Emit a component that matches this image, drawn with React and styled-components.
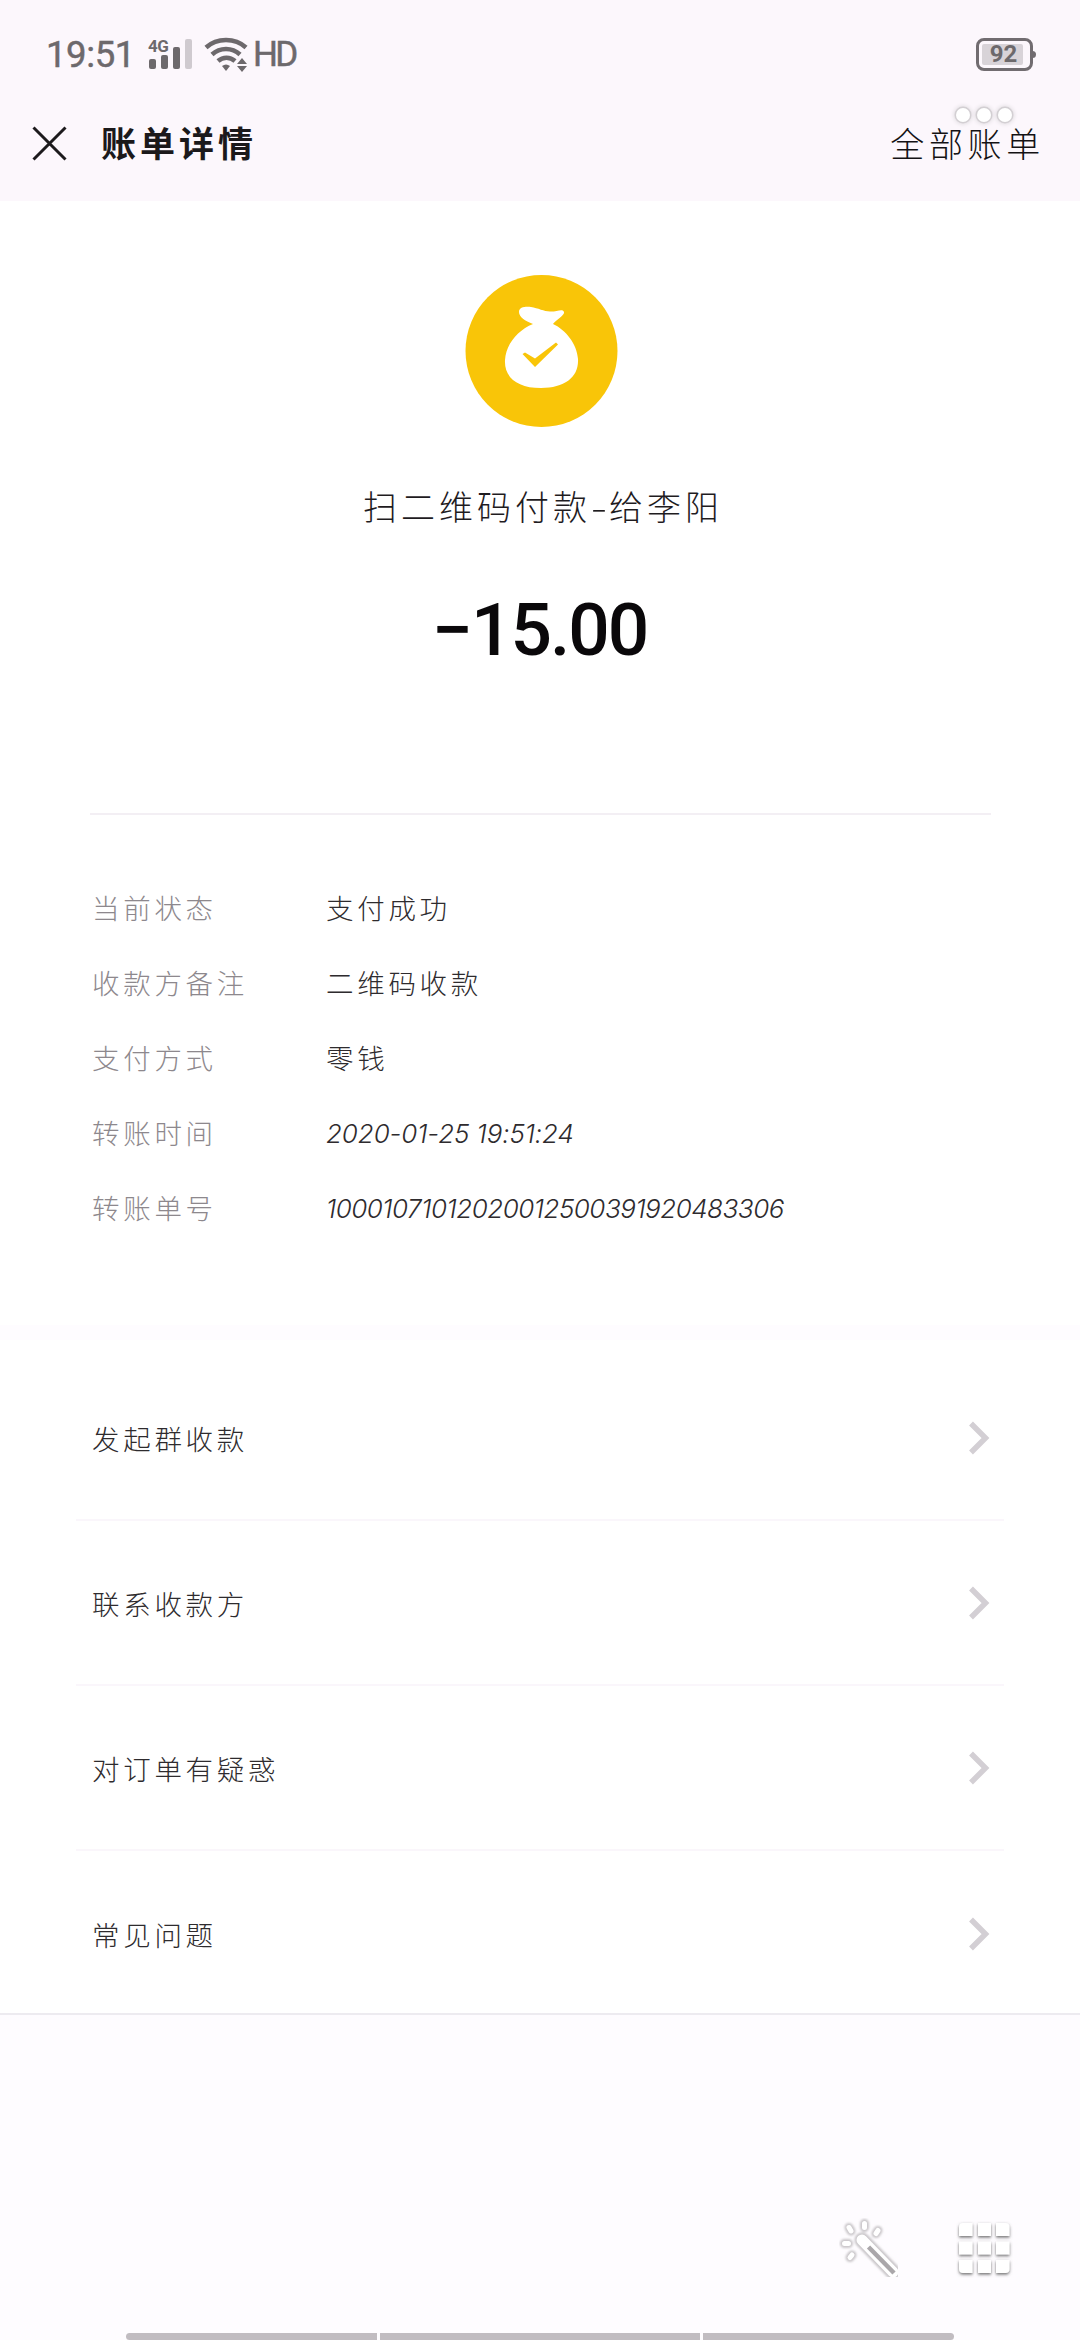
import React from "react";
import styled, { createGlobalStyle } from "styled-components";

const Global = createGlobalStyle`
  * { box-sizing: border-box; }
  body { margin: 0; background: #fefcff; }
`;

const hand = `"Noto Sans CJK SC", sans-serif`;

const Screen = styled.div`
  width: 1080px;
  height: 2340px;
  display: flex;
  flex-direction: column;
  overflow: hidden;
  background: #fefcff;
  font-family: ${hand};
  font-weight: 300;
  color: #2e2b2e;
`;

const Header = styled.header`
  height: 201px;
  flex: none;
  background: #fcf7fc;
  position: relative;
`;

const StatusBar = styled.div`
  height: 100px;
  padding: 9px 47px 0 46px;
  display: flex;
  align-items: center;
  color: #6d696c;
  font-family: Roboto, sans-serif;
  font-weight: 400;
`;

const Clock = styled.span`
  width: 102px;
  font-size: 36.5px;
  letter-spacing: -0.4px;
  -webkit-text-stroke: 0.5px #6d696c;
`;

const Hd = styled.span`
  margin-left: 5px;
  font-size: 35px;
  letter-spacing: -2.6px;
  -webkit-text-stroke: 0.5px #6d696c;
`;

const Spacer = styled.div`
  flex: 1;
`;

const Battery = styled.div`
  width: 57px;
  height: 33px;
  border: 3px solid #716c70;
  border-radius: 8px;
  padding: 3px;
  position: relative;
  &::after {
    content: "";
    position: absolute;
    left: 53px;
    top: 10px;
    width: 4px;
    height: 7px;
    border-radius: 0 4px 4px 0;
    background: #716c70;
  }
`;

const Charge = styled.div`
  width: 41px;
  height: 21px;
  border-radius: 2px;
  background: #d8d3d8;
  display: flex;
  align-items: center;
  justify-content: center;
  padding-left: 2px;
  font-size: 24px;
  font-weight: 700;
  line-height: 21px;
`;

const TitleBar = styled.div`
  height: 86px;
  padding: 0 35px 0 32px;
  display: flex;
  align-items: center;
`;

const Title = styled.h1`
  margin: -2px 0 0 34px;
  font-size: 35px;
  line-height: 50px;
  letter-spacing: 4px;
  font-weight: 700;
  color: #1b191b;
`;

const AllBills = styled.span`
  margin-top: -1px;
  font-size: 34px;
  line-height: 50px;
  letter-spacing: 4.7px;
  color: #141214;
`;

const Handle = styled.div`
  position: absolute;
  left: 956px;
  top: 108px;
  display: flex;
  gap: 7px;
`;

const Dot = styled.i`
  width: 14px;
  height: 14px;
  border-radius: 50%;
  background: #fff;
  box-shadow: 0 0 0 1.5px #d3cfd3, 0 0 4px 2px #dcd8dc;
`;

const Summary = styled.section`
  height: 612px;
  flex: none;
  background: #fff;
  display: flex;
  flex-direction: column;
  align-items: center;
  padding: 73px 0 0 2px;
`;

const Payee = styled.div`
  margin-top: 53px;
  height: 50px;
  line-height: 50px;
  font-size: 34px;
  letter-spacing: 4px;
  padding-left: 4px;
  color: #1f1c1f;
`;

const Dash = styled.span`
  display: inline-block;
  width: 18px;
  transform: scaleX(1.4);
  transform-origin: left center;
  letter-spacing: 0;
`;

const Amount = styled.div`
  margin-top: 56px;
  height: 86px;
  line-height: 86px;
  font-family: Roboto, sans-serif;
  font-weight: 500;
  font-size: 73px;
  letter-spacing: -2px;
  padding-right: 3px;
  color: #0a080a;
`;

const Details = styled.section`
  height: 512px;
  flex: none;
  padding: 0 89px 0 90px;
  background: #fff;
`;

const DetailList = styled.dl`
  margin: 0;
  padding: 54px 2px 0;
  border-top: 2px solid #f3eff4;
  display: grid;
  grid-template-columns: 234px 1fr;
  grid-auto-rows: 75px;
  align-items: center;
  font-size: 27.5px;
  letter-spacing: 3.7px;
`;

const Label = styled.dt`
  color: #8d888d;
`;

const Value = styled.dd`
  margin: 0;
  ${(p) =>
    p.$tracking !== undefined &&
    `padding-top: 4px; font-family: Inter, sans-serif; font-style: italic; font-size: 26px; letter-spacing: ${p.$tracking}px;`}
`;

const Band = styled.div`
  height: 15px;
  flex: none;
  background: #fefcff;
`;

const Actions = styled.nav`
  height: 675px;
  flex: none;
  padding: 16px 76px 0;
  background: #fff;
  border-bottom: 2px solid #edebf0;
`;

const Action = styled.a`
  height: 165px;
  padding: 0 13px 0 16px;
  display: flex;
  align-items: center;
  justify-content: space-between;
  border-bottom: ${(p) => (p.$last ? "none" : "2px solid #faf6fb")};
  font-size: 27.5px;
  letter-spacing: 3.7px;
`;

const Tools = styled.div`
  flex: 1;
  padding: 0 65px 52px 0;
  display: flex;
  justify-content: flex-end;
  align-items: flex-end;
  gap: 53px;
`;

const GestureBar = styled.div`
  height: 7px;
  flex: none;
  padding-left: 126px;
  display: flex;
  gap: 3px;
`;

const Segment = styled.i`
  width: ${(p) => p.$w}px;
  background: #c1bcc1;
  border-radius: ${(p) => p.$r || "0"};
`;

const SignalBox = styled.div`
  display: flex;
  position: relative;
`;

const Network = styled.span`
  position: absolute;
  left: 0;
  top: -2px;
  font-size: 17px;
  line-height: 20px;
  font-weight: 700;
  letter-spacing: -0.4px;
`;

const Signal = () => (
  <SignalBox>
    <svg width="45" height="34" viewBox="0 0 45 34">
      <g fill="#6d696c">
        <rect x="1" y="21" width="7" height="10" rx="2" />
        <rect x="13" y="17" width="7" height="14" rx="2" />
        <rect x="25" y="9" width="7" height="22" rx="2" />
      </g>
      <rect x="37" y="1" width="7" height="30" rx="2" fill="#cfcacf" />
    </svg>
    <Network>4G</Network>
  </SignalBox>
);

const Wifi = () => (
  <svg width="44" height="35" viewBox="0 0 44 35">
    <g fill="none" stroke="#6d696c" strokeWidth="4.5">
      <path d="M2 10.500C13 .5 31 .5 42 10.500" />
      <path d="M8 17.500C16 10 28 10 36 17.500" />
      <path d="M14 24C19 19.500 26 19.500 31 24" />
    </g>
    <path d="M18 29q4-3 8 0l-4 5z" fill="#6d696c" />
    <path d="M33 27l5-6 5 6zM33 29h10l-5 6z" fill="#6d696c" />
  </svg>
);

const Close = () => (
  <svg width="35" height="35" viewBox="0 0 35 35">
    <path d="M1.500 1.500l32 32M33.500 1.500l-32 32" stroke="#1c1a1c" strokeWidth="3" />
  </svg>
);

const MoneyBag = () => (
  <svg width="154" height="154" viewBox="0 0 154 154">
    <circle cx="77.500" cy="77" r="76" fill="#f9c508" />
    <path
      fill="#fff"
      d="M69 50C61 47 55 43 55 38C55 33 61 32.500 67 33C74 34 80 37.500 86 37.500C92 38 99 34 100 38C101 41 92 46 89 50C102 56 113 70 114 85C115 103 101 114 77 114C53 114 40 103 41 86C42 70 54 56 69 50Z"
    />
    <path fill="#f9c508" d="M58.500 80L61 78.500L71 84.500L92 68.500L94 70.500L71 93Z" />
  </svg>
);

const Chevron = () => (
  <svg width="24" height="34" viewBox="0 0 24 34">
    <path d="M4 2.500l14.500 14.500L4 31.500" fill="none" stroke="#d3cfd4" strokeWidth="5.5" />
  </svg>
);

const Wand = () => (
  <svg width="64" height="64" viewBox="0 0 64 64">
    <defs>
      <filter id="wandBlur" x="-10%" y="-10%" width="120%" height="120%">
        <feGaussianBlur stdDeviation="0.8" />
      </filter>
    </defs>
    <g strokeLinecap="round">
      <g stroke="#c9c6c9" filter="url(#wandBlur)">
        <path d="M24 23l31 32" strokeWidth="15" />
        <path d="M11 10.500l2 3.500M26.500 6.500v4M40 13.500l-2 3M6.500 26.500h4M12 40.500l2-2.500" strokeWidth="9" />
      </g>
      <g stroke="#fff">
        <path d="M24 23l31 32" strokeWidth="11" />
        <path d="M11 10.500l2 3.500M26.500 6.500v4M40 13.500l-2 3M6.500 26.500h4M12 40.500l2-2.500" strokeWidth="5" />
      </g>
    </g>
    <path d="M30.500 30l25.500 26" stroke="#aaa7aa" strokeWidth="4.500" />
  </svg>
);

const Grid = () => (
  <svg width="60" height="62" viewBox="0 0 60 62">
    <defs>
      <filter id="gridShadow" x="-20%" y="-20%" width="140%" height="140%">
        <feDropShadow dx="0" dy="1.500" stdDeviation="1.4" floodColor="#555" floodOpacity="0.85" />
      </filter>
    </defs>
    <g fill="#fff" filter="url(#gridShadow)">
      <path d="M8 4H17.500V17H4V8Q4 4 8 4ZM23 4H36V17H23ZM41 4H50.500Q54.500 4 54.500 8V17H41Z" />
      <path d="M4 22.500H17.500V35.500H4ZM23 22.500H36V35.500H23ZM41 22.500H54.500V35.500H41Z" />
      <path d="M4 41H17.500V54H8Q4 54 4 50ZM23 41H36V54H23ZM41 41H54.500V50Q54.500 54 50.500 54H41Z" />
    </g>
  </svg>
);

const IconSlot = styled.span`
  display: flex;
  margin-left: ${(p) => p.$left || 0}px;
`;

const details = [
  { label: "当前状态", value: "支付成功" },
  { label: "收款方备注", value: "二维码收款" },
  { label: "支付方式", value: "零钱" },
  { label: "转账时间", value: "2020-01-25 19:51:24", tracking: -0.1 },
  { label: "转账单号", value: "10001071012020012500391920483306", tracking: -0.5 },
];

const actions = ["发起群收款", "联系收款方", "对订单有疑惑", "常见问题"];

export default function App() {
  return (
    <Screen>
      <Global />
      <Header>
        <StatusBar>
          <Clock>19:51</Clock>
          <IconSlot><Signal /></IconSlot>
          <IconSlot $left={11}><Wifi /></IconSlot>
          <Hd>HD</Hd>
          <Spacer />
          <Battery>
            <Charge>92</Charge>
          </Battery>
        </StatusBar>
        <TitleBar>
          <Close />
          <Title>账单详情</Title>
          <Spacer />
          <AllBills>全部账单</AllBills>
        </TitleBar>
        <Handle>
          <Dot />
          <Dot />
          <Dot />
        </Handle>
      </Header>
      <Summary>
        <MoneyBag />
        <Payee>
          扫二维码付款<Dash>-</Dash>给李阳
        </Payee>
        <Amount>−15.00</Amount>
      </Summary>
      <Details>
        <DetailList>
          {details.map((d) => (
            <React.Fragment key={d.label}>
              <Label>{d.label}</Label>
              <Value $tracking={d.tracking}>{d.value}</Value>
            </React.Fragment>
          ))}
        </DetailList>
      </Details>
      <Band />
      <Actions>
        {actions.map((name, i) => (
          <Action key={name} $last={i === actions.length - 1}>
            {name}
            <Chevron />
          </Action>
        ))}
      </Actions>
      <Tools>
        <Wand />
        <Grid />
      </Tools>
      <GestureBar>
        <Segment $w={251} $r="4px 0 0 4px" />
        <Segment $w={320} />
        <Segment $w={251} $r="0 4px 4px 0" />
      </GestureBar>
    </Screen>
  );
}
